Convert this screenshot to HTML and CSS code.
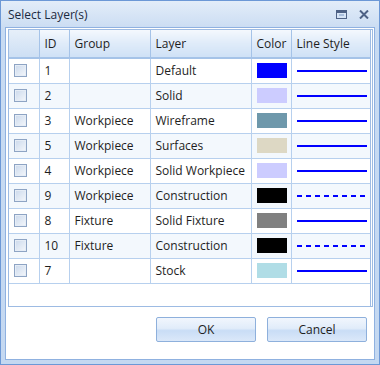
FILE: index.html
```html
<!DOCTYPE html>
<html lang="en">
<head>
    <meta charset="UTF-8">
    <title>Select Layer(s)</title>
    <link rel="stylesheet" href="styles.css">
</head>
<body>
    <div class="window">
        <!-- Title bar -->
        <div class="titlebar">
            <span class="title">Select Layer(s)</span>
            <div class="controls">
                <svg width="11" height="9" viewBox="0 0 11 9"><rect x="0.5" y="0.5" width="10" height="8" fill="none" stroke="#4d6185"/><rect x="0" y="0" width="11" height="3" fill="#4d6185"/><rect x="3" y="4" width="5" height="2" fill="#a8bedc"/></svg>
                <svg width="10" height="9" viewBox="0 0 10 9"><path d="M1 0.5 L9 8.5 M9 0.5 L1 8.5" stroke="#4d6185" stroke-width="2"/></svg>
            </div>
        </div>

        <!-- Client -->
        <div class="client">
            <div class="grid">
                <table>
                    <colgroup>
                        <col style="width:30px"><col style="width:30px"><col style="width:81px">
                        <col style="width:101px"><col style="width:40px"><col>
                    </colgroup>
                    <thead>
                        <tr><th></th><th>ID</th><th>Group</th><th>Layer</th><th>Color</th><th>Line Style</th></tr>
                    </thead>
                    <tbody>
                        <tr><td><span class="check"></span></td><td>1</td><td></td><td>Default</td><td><span class="swatch" style="background:#0000ff"></span></td><td><span class="line"></span></td></tr>
                        <tr><td><span class="check"></span></td><td>2</td><td></td><td>Solid</td><td><span class="swatch" style="background:#ccccff"></span></td><td><span class="line"></span></td></tr>
                        <tr><td><span class="check"></span></td><td>3</td><td>Workpiece</td><td>Wireframe</td><td><span class="swatch" style="background:#6e98ab"></span></td><td><span class="line"></span></td></tr>
                        <tr><td><span class="check"></span></td><td>5</td><td>Workpiece</td><td>Surfaces</td><td><span class="swatch" style="background:#ddd8c4"></span></td><td><span class="line"></span></td></tr>
                        <tr><td><span class="check"></span></td><td>4</td><td>Workpiece</td><td>Solid Workpiece</td><td><span class="swatch" style="background:#ccccff"></span></td><td><span class="line"></span></td></tr>
                        <tr><td><span class="check"></span></td><td>9</td><td>Workpiece</td><td>Construction</td><td><span class="swatch" style="background:#000000"></span></td><td><span class="line dashed"></span></td></tr>
                        <tr><td><span class="check"></span></td><td>8</td><td>Fixture</td><td>Solid Fixture</td><td><span class="swatch" style="background:#808080"></span></td><td><span class="line"></span></td></tr>
                        <tr><td><span class="check"></span></td><td>10</td><td>Fixture</td><td>Construction</td><td><span class="swatch" style="background:#000000"></span></td><td><span class="line dashed"></span></td></tr>
                        <tr><td><span class="check"></span></td><td>7</td><td></td><td>Stock</td><td><span class="swatch" style="background:#b0dde6"></span></td><td><span class="line"></span></td></tr>
                    </tbody>
                </table>
            </div>
            <div class="buttons">
                <button class="btn">OK</button>
                <button class="btn">Cancel</button>
            </div>
        </div>
    </div>
</body>
</html>
```
FILE: styles.css
```css
* {
    margin: 0;
    padding: 0;
    box-sizing: border-box;
}

body {
    font-family: "Open Sans", "Noto Sans", sans-serif;
    font-size: 12px;
    color: #1e1e1e;
    background: #ffffff;
}

/* Window frame */
.window {
    width: 380px;
    height: 365px;
    border: 1px solid #6c98d6;
    background: linear-gradient(#e3edf9, #c8dbf2 30px, #c4d8f1);
    padding: 0 4px 4px 4px;
    display: flex;
    flex-direction: column;
}

.titlebar {
    height: 26px;
    display: flex;
    align-items: center;
    justify-content: space-between;
    padding: 0 6px 0 3px;
}

.title {
    font-size: 12px;
    color: #1b2a40;
}

.controls {
    display: flex;
    align-items: center;
    gap: 12px;
}

.client {
    flex: 1;
    background: #ffffff;
    border: 1px solid #8fb1e0;
    padding: 1px 1px 0 2px;
    display: flex;
    flex-direction: column;
}

/* Grid */
.grid {
    height: 278px;
    border: 1px solid #9dbbe3;
    border-right: 3px double #9dbbe3;
}

table {
    width: 100%;
    border-collapse: collapse;
    table-layout: fixed;
}

th {
    height: 28px;
    font-weight: normal;
    text-align: left;
    padding: 0 5px;
    background: linear-gradient(#f4f8fd, #dfebf9 50%, #cfe1f6);
    border-right: 1px solid #a5c3e8;
    border-bottom: 2px solid #a5c3e8;
    white-space: nowrap;
}

th:first-child {
    background: linear-gradient(#e6eff9, #cddff4);
}

th:last-child {
    border-right: none;
}

td {
    height: 25px;
    padding: 0 5px;
    border-right: 1px solid #b7d0ee;
    border-bottom: 1px solid #b7d0ee;
    white-space: nowrap;
    vertical-align: middle;
}

td:last-child {
    border-right: none;
}

tbody tr:nth-child(even) td {
    background: #f3f8fd;
}

.check {
    display: block;
    width: 13px;
    height: 13px;
    border: 1px solid #8ea4c4;
    background: linear-gradient(135deg, #cbd9ec, #f4f7fb);
    box-shadow: inset 0 0 0 1px #e6edf6;
}

.swatch {
    display: block;
    width: 30px;
    height: 15px;
}

.line {
    display: block;
    width: 70px;
    height: 2px;
    background: #0000ff;
}

.line.dashed {
    background: repeating-linear-gradient(90deg, #0000ff 0 5px, transparent 5px 9px);
}

/* Buttons */
.buttons {
    display: flex;
    justify-content: flex-end;
    gap: 11px;
    padding: 10px 6px 0 0;
}

.btn {
    width: 100px;
    height: 25px;
    font-family: "Open Sans", "Noto Sans", sans-serif;
    font-size: 12px;
    color: #1e1e1e;
    border: 1px solid #8eb0dc;
    border-radius: 2px;
    background: linear-gradient(#f1f6fd, #e1ecfa 45%, #c9ddf6 55%, #dbe8f9);
}
```
